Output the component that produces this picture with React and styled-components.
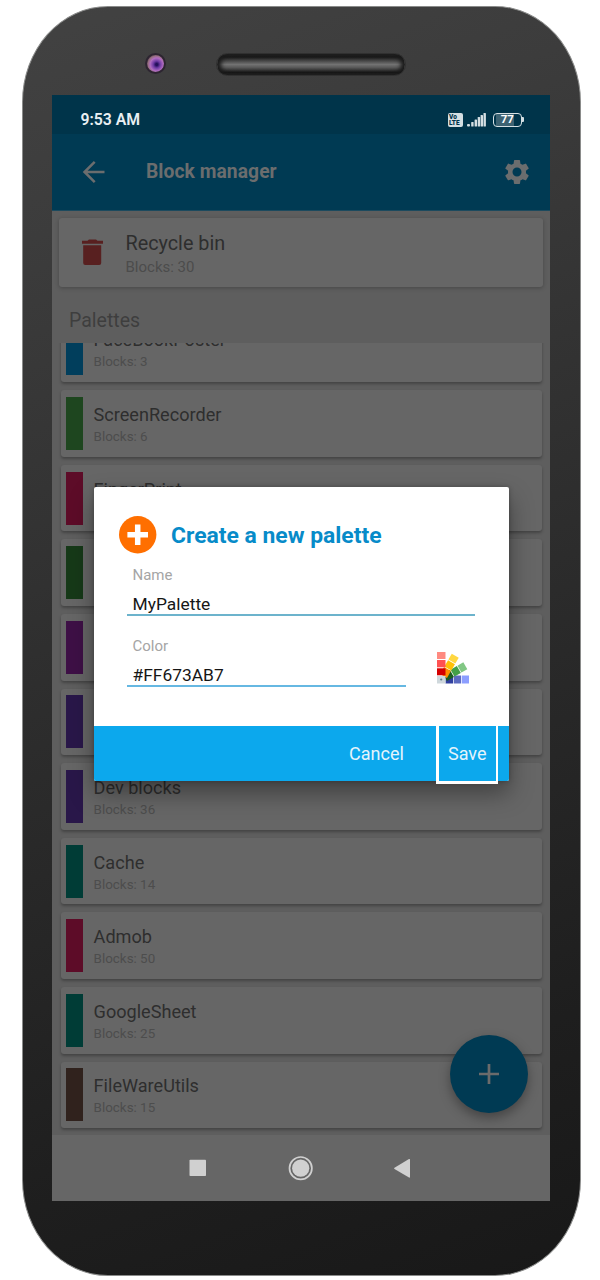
import React from 'react';
import styled, { createGlobalStyle } from 'styled-components';

const Global = createGlobalStyle`
  * { box-sizing: border-box; }
  body { margin: 0; background: #fff; font-family: Roboto, "Liberation Sans", sans-serif; }
`;

const Page = styled.main`
  width: 600px;
  height: 1280px;
  padding: 6px 0 0 22px;
  overflow: hidden;
  background: #fff;
`;

const Phone = styled.div`
  width: 558.5px;
  height: 1270px;
  border: 1px solid #8a8b8a;
  border-radius: 86px / 96px;
  background: linear-gradient(160deg, #424242 0%, #3c3c3c 16%, #2a2a2a 55%, #1e1e1e 82%, #181818 100%);
`;

const Bezel = styled.div`
  display: flex;
  align-items: center;
  height: 88px;
  padding: 26px 0 0 122px;
`;

const Camera = styled.div`
  width: 21px;
  height: 21px;
  margin-bottom: 1px;
  border-radius: 50%;
  border: 2px solid #2d2531;
  background: radial-gradient(circle at 57% 56%, #24105c 0 8%, #6e3aa4 25%, #b06cc0 48%, #96707f 64%, #3d2c3b 82%);
`;

const Speaker = styled.div`
  width: 190px;
  height: 23px;
  margin-left: 50px;
  border-radius: 12px;
  border: 1px solid #303030;
  background: linear-gradient(#292929 0%, #191919 14%, #4a4a4a 34%, #727272 50%, #595959 64%, #161616 88%, #292929 100%);
  box-shadow: inset 4px 0 4px #1b1b1b, inset -4px 0 4px #1b1b1b;
`;

const Screen = styled.div`
  position: relative;
  display: flex;
  flex-direction: column;
  width: 498px;
  height: 1106px;
  margin-left: 29px;
  overflow: hidden;
  background: #5e5e5e;
`;

const StatusBar = styled.div`
  display: flex;
  align-items: center;
  height: 39px;
  padding: 10px 26px 0 28.5px;
  background: #00344a;
`;

const Clock = styled.span`
  flex: 1;
  color: #e9eff2;
  font-size: 15.8px;
  font-weight: 600;
  line-height: 20px;
`;

const Toolbar = styled.header`
  display: flex;
  align-items: center;
  height: 76.5px;
  padding: 0 18px 0 30px;
  background: #003a53;
  border-bottom: 1px solid #1c4a5e;
  color: #6b6d6e;
`;

const ToolbarTitle = styled.h1`
  flex: 1;
  margin: 0 0 0 40px;
  font-size: 19.3px;
  font-weight: 700;
  letter-spacing: 0.05px;
`;

const BinCard = styled.section`
  display: flex;
  align-items: center;
  width: 484px;
  height: 69px;
  margin: 7.5px 0 0 7px;
  padding-left: 23px;
  border-radius: 3px;
  background: #666;
  box-shadow: 0 1px 4px rgba(0, 0, 0, 0.25);
  flex: none;
`;

const BinText = styled.div`
  margin-left: 22.5px;
`;

const BinTitle = styled.div`
  margin-top: 5px;
  font-size: 19.8px;
  line-height: 24px;
  color: #2e2e2e;
`;

const BinCount = styled.div`
  font-size: 15px;
  line-height: 23px;
  color: #4c4c4c;
`;

const SectionTitle = styled.h2`
  display: flex;
  align-items: center;
  height: 56px;
  margin: 0;
  padding: 10px 0 0 17px;
  font-size: 19.5px;
  font-weight: 400;
  color: #3e3e3e;
  flex: none;
`;

const ListViewport = styled.div`
  flex: 1;
  overflow: hidden;
`;

const List = styled.div`
  display: flex;
  flex-direction: column;
  gap: 8.1px;
  margin: -27.3px 0 0 8.5px;
`;

const Card = styled.article`
  display: flex;
  align-items: center;
  width: 481.5px;
  height: 66.5px;
  padding-left: 5.5px;
  border-radius: 3px;
  background: #666;
  box-shadow: 0 2px 3px rgba(0, 0, 0, 0.28);
`;

const Swatch = styled.span`
  width: 16.6px;
  height: 53px;
  background: ${(p) => p.$color};
`;

const CardText = styled.div`
  height: 44px;
  margin: 5px 0 0 11px;
`;

const CardTitle = styled.div`
  font-size: 18.1px;
  line-height: 22px;
  color: #2e2e2e;
`;

const CardCount = styled.div`
  font-size: 13.4px;
  line-height: 22px;
  color: #4d4d4d;
`;

const Fab = styled.button`
  position: absolute;
  right: 22px;
  bottom: 88.5px;
  display: grid;
  place-items: center;
  width: 78px;
  height: 78px;
  padding: 0;
  border: 0;
  border-radius: 50%;
  background: #003a53;
  box-shadow: 0 5px 12px rgba(0, 0, 0, 0.34);
`;

const NavBar = styled.nav`
  display: flex;
  align-items: center;
  height: 66px;
  padding-left: 137px;
  background: #666;
  flex: none;
`;

const Dialog = styled.div`
  position: absolute;
  left: 41.5px;
  top: 391.5px;
  display: flex;
  flex-direction: column;
  width: 415px;
  height: 294px;
  border-radius: 2px;
  background: #fff;
  box-shadow: 0 12px 24px rgba(0, 0, 0, 0.38), 0 0 5px rgba(0, 0, 0, 0.25);
`;

const DialogHeader = styled.div`
  display: flex;
  align-items: center;
  height: 67px;
  padding: 29px 0 0 25.5px;
`;

const DialogTitle = styled.h2`
  margin: 3px 0 0 14px;
  font-size: 22.9px;
  line-height: 26px;
  font-weight: 700;
  color: #078bc9;
`;

const Field = styled.label`
  display: block;
  width: ${(p) => p.$width}px;
  height: 62px;
  padding-left: 5.5px;
  border-bottom: 2px solid ${(p) => p.$line};
`;

const FieldLabel = styled.span`
  display: block;
  padding-top: 12.5px;
  font-size: 15px;
  line-height: 18px;
  color: #a5a5a5;
`;

const FieldValue = styled.span`
  display: block;
  padding-top: 9px;
  font-size: 17.4px;
  line-height: 22px;
  color: #161616;
`;

const Fields = styled.div`
  display: flex;
  flex-direction: column;
  gap: 9px;
  flex: 1;
  padding-left: 33.5px;
`;

const ColorRow = styled.div`
  display: flex;
  align-items: flex-start;

  > svg {
    margin: 27px 0 0 30.5px;
  }
`;

const DialogFooter = styled.div`
  display: flex;
  justify-content: flex-end;
  height: 55px;
  padding-right: 10.5px;
  border-radius: 0 0 2px 2px;
  background: #0ca8ed;
`;

const DialogButton = styled.button`
  width: ${(p) => p.$width}px;
  height: ${(p) => (p.$marked ? 58.5 : 55)}px;
  padding: ${(p) => (p.$marked ? '1px 0 0' : '1px 0 0')};
  border: solid #fff;
  border-width: ${(p) => (p.$marked ? '0 2.5px 3px 3px' : '0')};
  background: transparent;
  color: #e4f4fc;
  font: 400 18px/22px Roboto, sans-serif;
`;

// Rows without a name lie behind the dialog, so only their swatch is rendered.
const palettes = [
  { name: 'FaceBookPoster', blocks: 3, color: '#013e5c' },
  { name: 'ScreenRecorder', blocks: 6, color: '#1e461f' },
  { name: 'FingerPrint', color: '#5d0c28' },
  { color: '#163918' },
  { color: '#3e1046' },
  { color: '#291749' },
  { name: 'Dev blocks', blocks: 36, color: '#291749' },
  { name: 'Cache', blocks: 14, color: '#003c36' },
  { name: 'Admob', blocks: 50, color: '#5d0c28' },
  { name: 'GoogleSheet', blocks: 25, color: '#003c36' },
  { name: 'FileWareUtils', blocks: 15, color: '#30221d' },
];

const VolteBadge = styled.span`
  display: flex;
  flex-direction: column;
  justify-content: center;
  width: 15.5px;
  height: 14px;
  margin-right: 3.5px;
  padding-left: 1.5px;
  border-radius: 2px;
  background: #d5dfe3;
  color: #00344a;
  font-size: 6.5px;
  font-weight: 900;
  line-height: 6px;
`;

const Battery = styled.span`
  display: grid;
  place-items: center;
  width: 29.5px;
  height: 14px;
  border: 1.5px solid #d5dfe3;
  border-radius: 4px;
  background: linear-gradient(90deg, transparent 2px, #3d6272 2px 20px, transparent 20px);
  color: #fff;
  font-size: 11.5px;
  font-weight: 700;
  line-height: 11px;
`;

const BatteryTip = styled.span`
  width: 2px;
  height: 5px;
  border-radius: 0 1px 1px 0;
  background: #d5dfe3;
`;

const Signal = styled.svg`
  margin-right: 7px;
`;

const SignalIcon = () => (
  <Signal width="19" height="14" viewBox="0 0 19 14" fill="#d5dfe3">
    <rect x="0" y="11" width="3" height="2.5" rx="1" />
    <rect x="4.2" y="9" width="2.4" height="4.5" rx=".6" />
    <rect x="7.6" y="6.5" width="2.4" height="7" rx=".6" />
    <rect x="10.7" y="4" width="2.4" height="9.5" rx=".6" />
    <rect x="13.6" y="2" width="2.4" height="11.5" rx=".6" />
    <rect x="16.5" y="0" width="2.4" height="13.5" rx=".6" />
  </Signal>
);

const BackIcon = () => (
  <svg width="24" height="24" viewBox="0 0 24 24" fill="none" stroke="currentColor" strokeWidth="2.5">
    <path d="M22.5 12H3M12.7 1.8 2.5 12l10.2 10.2" />
  </svg>
);

const GearIcon = () => (
  <svg width="30" height="30" viewBox="0 0 24 24" fill="currentColor">
    <path d="M19.14 12.94c.04-.3.06-.61.06-.94s-.02-.64-.07-.94l2.03-1.58a.49.49 0 0 0 .12-.61l-1.92-3.32a.488.488 0 0 0-.59-.22l-2.39.96c-.5-.38-1.03-.7-1.62-.94l-.36-2.54a.484.484 0 0 0-.48-.41h-3.84c-.24 0-.43.17-.47.41l-.36 2.54c-.59.24-1.13.57-1.62.94l-2.39-.96c-.22-.08-.47 0-.59.22L2.74 8.87c-.12.21-.08.47.12.61l2.03 1.58c-.05.3-.09.63-.09.94s.02.64.07.94l-2.03 1.58a.49.49 0 0 0-.12.61l1.92 3.32c.12.22.37.29.59.22l2.39-.96c.5.38 1.03.7 1.62.94l.36 2.54c.05.24.24.41.48.41h3.84c.24 0 .44-.17.47-.41l.36-2.54c.59-.24 1.13-.56 1.62-.94l2.39.96c.22.08.47 0 .59-.22l1.92-3.32c.12-.22.07-.47-.12-.61zM12 15.6A3.6 3.6 0 1 1 12 8.4a3.6 3.6 0 0 1 0 7.2z" />
  </svg>
);

const TrashIcon = () => (
  <svg width="21" height="27" viewBox="0 0 21 27" fill="#582020">
    <path d="M0 1.8h5.5L7 .5h7L15.5 1.8H21v3H0zM1.2 6.2h18V24q0 2-2 2h-14q-2 0-2-2z" />
  </svg>
);

const PlusBadge = () => (
  <svg width="38" height="38" viewBox="0 0 38 38">
    <circle cx="18.7" cy="18.7" r="18.7" fill="#ff6f00" />
    <path d="M18.7 8.4v20.6M8.4 18.7h20.6" stroke="#fff" strokeWidth="5.5" />
  </svg>
);

const SwatchesIcon = () => (
  <svg width="32" height="32" viewBox="0 0 32 32">
    <g transform="rotate(90 4.5 27.5)">
      <path fill="#303f9f" d="M.5 16h8v7.5h-8z" />
      <path fill="#5c6bc0" d="M.5 8h8v7.3h-8z" />
      <path fill="#8c9eff" d="M.5 0h8v7.3h-8z" />
    </g>
    <g transform="rotate(60 4.5 27.5)">
      <path fill="#1b5e20" d="M.5 15.5h8v8h-8z" />
      <path fill="#43a047" d="M.5 7.5h8v7.3h-8z" />
      <path fill="#81c784" d="M.5 0h8v6.8h-8z" />
    </g>
    <g transform="rotate(30 4.5 27.5)">
      <path fill="#ff8f00" d="M.5 15.5h8v8h-8z" />
      <path fill="#ffc107" d="M.5 7.5h8v7.3h-8z" />
      <path fill="#ffd740" d="M.5 0h8v6.8h-8z" />
    </g>
    <path fill="#ff8a80" d="M0 0h8.5v7H0z" />
    <path fill="#ff5252" d="M0 8h8.5v7.3H0z" />
    <path fill="#d50000" d="M0 16.3h8.5v7H0z" />
    <path fill="#cfd8dc" d="M0 24h8.5v7.5H0z" />
    <circle cx="4.2" cy="27.5" r="1.1" fill="#607d8b" />
  </svg>
);

const NavIcons = () => (
  <svg width="224" height="26" viewBox="0 0 224 26" fill="#d0d0d0">
    <rect x=".5" y="4.7" width="16.5" height="16.3" rx=".8" />
    <circle cx="111.7" cy="13.2" r="11.2" fill="none" stroke="#d0d0d0" strokeWidth="1.7" />
    <circle cx="111.7" cy="13.2" r="8.6" />
    <path d="M205.5 12.7 220 4.1q1-.5 1 .7v17q0 1.2-1 .7L205.5 13.9q-1-.6 0-1.2z" />
  </svg>
);

function PaletteCard({ name, blocks, color }) {
  return (
    <Card>
      <Swatch $color={color} />
      <CardText>
        {name && <CardTitle>{name}</CardTitle>}
        {blocks && <CardCount>Blocks: {blocks}</CardCount>}
      </CardText>
    </Card>
  );
}

export default function App() {
  return (
    <Page>
      <Global />
      <Phone>
        <Bezel>
          <Camera />
          <Speaker />
        </Bezel>
        <Screen>
          <StatusBar>
            <Clock>9:53 AM</Clock>
            <VolteBadge><span>Vo</span><span>LTE</span></VolteBadge>
            <SignalIcon />
            <Battery>77</Battery>
            <BatteryTip />
          </StatusBar>
          <Toolbar>
            <BackIcon />
            <ToolbarTitle>Block manager</ToolbarTitle>
            <GearIcon />
          </Toolbar>
          <BinCard>
            <TrashIcon />
            <BinText>
              <BinTitle>Recycle bin</BinTitle>
              <BinCount>Blocks: 30</BinCount>
            </BinText>
          </BinCard>
          <SectionTitle>Palettes</SectionTitle>
          <ListViewport>
            <List>
              {palettes.map((p, i) => <PaletteCard key={i} {...p} />)}
            </List>
          </ListViewport>
          <NavBar><NavIcons /></NavBar>
          <Fab aria-label="Add">
            <svg width="20" height="20" viewBox="0 0 20 20" stroke="#6b6b6b" strokeWidth="2.7">
              <path d="M10 0v20M0 10h20" />
            </svg>
          </Fab>
          <Dialog>
            <DialogHeader>
              <PlusBadge />
              <DialogTitle>Create a new palette</DialogTitle>
            </DialogHeader>
            <Fields>
              <Field $width={348} $line="#6cb3cc">
                <FieldLabel>Name</FieldLabel>
                <FieldValue>MyPalette</FieldValue>
              </Field>
              <ColorRow>
                <Field $width={279} $line="#66b8e2">
                  <FieldLabel>Color</FieldLabel>
                  <FieldValue>#FF673AB7</FieldValue>
                </Field>
                <SwatchesIcon />
              </ColorRow>
            </Fields>
            <DialogFooter>
              <DialogButton $width={118}>Cancel</DialogButton>
              <DialogButton $width={62.5} $marked>Save</DialogButton>
            </DialogFooter>
          </Dialog>
        </Screen>
      </Phone>
    </Page>
  );
}
